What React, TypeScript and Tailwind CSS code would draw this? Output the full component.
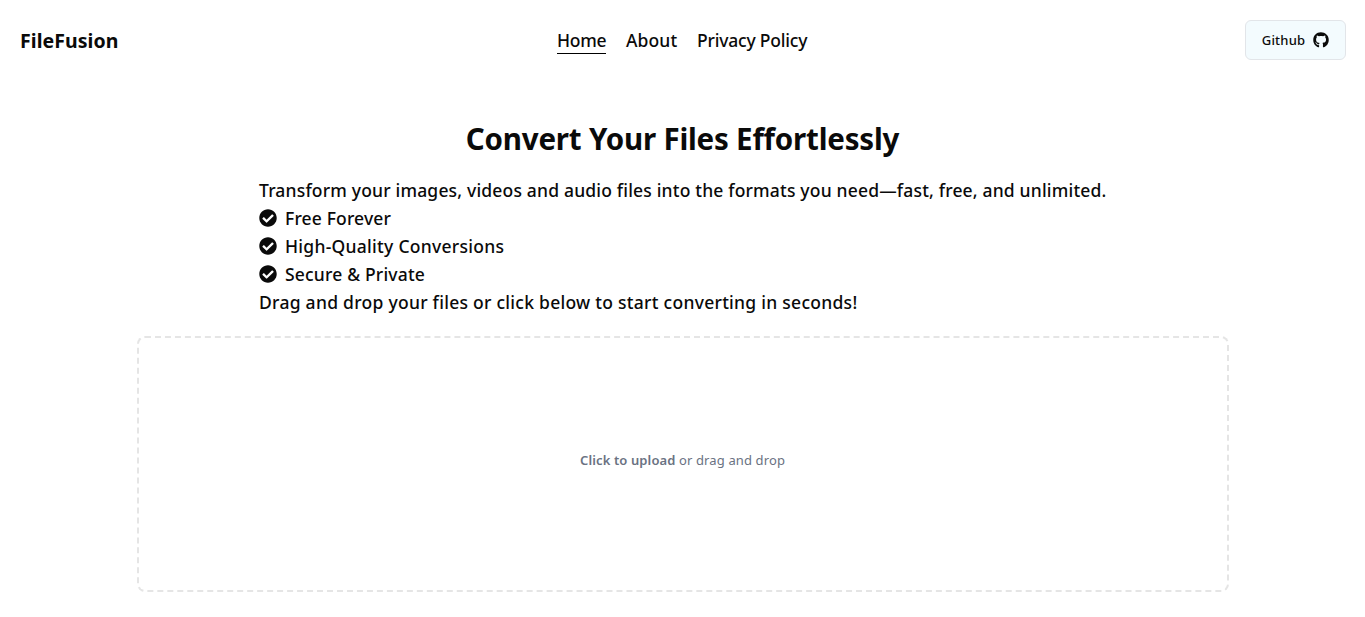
import { FaCheckCircle, FaGithub } from "react-icons/fa";

const features = [
  { label: "Free Forever", spacing: "tracking-[0.15px]" },
  { label: "High-Quality Conversions", spacing: "tracking-[0.27px]" },
  { label: "Secure & Private", spacing: "tracking-[0.18px]" },
];

function Header() {
  return (
    <header className="flex h-20 items-center justify-between pr-[19px] pl-5">
      <div className="w-[99px] pt-0.5 text-[19.5px] leading-7 font-bold tracking-[0.05px] whitespace-nowrap">FileFusion</div>
      <nav className="flex gap-5 pt-px text-[17.5px] leading-[25px] font-medium whitespace-nowrap">
        <a className="w-[49px] border-b border-black tracking-[-0.25px]">Home</a>
        <a className="w-[51px] tracking-[0.1px]">About</a>
        <a className="w-[110px] tracking-[-0.2px]">Privacy Policy</a>
      </nav>
      <button className="flex h-10 w-[101px] items-center justify-center gap-2 rounded-md border border-[#e2e5e9] bg-[#f3fbfe] text-[13px] font-medium tracking-[0.2px]">
        <span className="pt-0.5">Github</span>
        <FaGithub className="size-4" />
      </button>
    </header>
  );
}

export default function App() {
  return (
    <div className="min-h-[617px] bg-white font-['Noto_Sans','Open_Sans',sans-serif] text-[#0a0a0a]">
      <Header />
      <main className="flex flex-col items-center pt-[41px]">
        <h1 className="text-[29.5px] leading-9 font-bold tracking-[-0.2px] whitespace-nowrap">Convert Your Files Effortlessly</h1>
        <div className="mt-[19px] w-[847px] text-[17.5px] leading-7 font-medium whitespace-nowrap">
          <p className="tracking-[0.18px]">Transform your images, videos and audio files into the formats you need—fast, free, and unlimited.</p>
          <ul>
            {features.map((f) => (
              <li key={f.label} className="flex items-center gap-2">
                <FaCheckCircle className="size-[18px]" />
                <span className={f.spacing}>{f.label}</span>
              </li>
            ))}
          </ul>
          <p className="tracking-[0.27px]">Drag and drop your files or click below to start converting in seconds!</p>
        </div>
        <div className="mt-5 flex h-64 w-[1092px] items-center justify-center rounded-lg border-2 border-dashed border-[#e5e5e5] pb-1.5 text-[13px] tracking-[0.12px] text-gray-500">
          <p className="whitespace-nowrap">
            <span className="font-semibold">Click to upload</span> or drag and drop
          </p>
        </div>
      </main>
    </div>
  );
}
